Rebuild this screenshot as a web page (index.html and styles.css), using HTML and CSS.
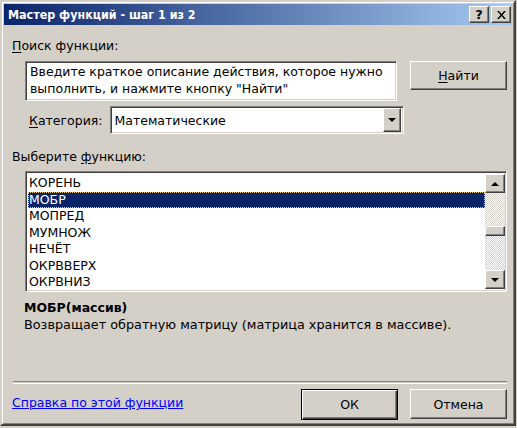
FILE: index.html
```html
<!doctype html>
<html lang="ru">
<head>
    <meta charset="utf-8">
    <link rel="stylesheet" href="styles.css">
    <title>Мастер функций - шаг 1 из 2</title>
</head>
<body>
    <div class="window">
        <div class="titlebar">
            <span class="title">Мастер функций - шаг 1 из 2</span>
            <span class="caption-btns">
                <span class="cbtn">?</span>
                <span class="cbtn cbtn-x">
                    <svg width="9" height="8" viewBox="0 0 9 8"><path d="M0 0h2l2.5 3 2.5-3h2l-3.5 4 3.5 4h-2l-2.5-3-2.5 3h-2l3.5-4z" fill="#000"/></svg>
                </span>
            </span>
        </div>

        <div class="body">
            <div class="label label-search"><u>П</u>оиск функции:</div>

            <div class="row-search">
                <div class="field search-box">Введите краткое описание действия, которое нужно выполнить, и нажмите кнопку "Найти"</div>
                <div class="btn btn-find"><u>Н</u>айти</div>
            </div>

            <div class="row-category">
                <span class="label"><u>К</u>атегория:</span>
                <div class="field combo">
                    <span class="combo-text">Математические</span>
                    <span class="btn combo-arrow"><i class="tri tri-down"></i></span>
                </div>
            </div>

            <div class="label label-select">Выберите <u>ф</u>ункцию:</div>

            <div class="field listbox">
                <ul class="items">
                    <li>КОРЕНЬ</li>
                    <li class="selected">МОБР</li>
                    <li>МОПРЕД</li>
                    <li>МУМНОЖ</li>
                    <li>НЕЧЁТ</li>
                    <li>ОКРВВЕРХ</li>
                    <li>ОКРВНИЗ</li>
                </ul>
                <div class="scrollbar">
                    <span class="btn sb-btn"><i class="tri tri-up"></i></span>
                    <span class="sb-track"></span>
                    <span class="btn sb-thumb"></span>
                    <span class="sb-track sb-track-long"></span>
                    <span class="btn sb-btn"><i class="tri tri-down"></i></span>
                </div>
            </div>

            <div class="fn-name">МОБР(массив)</div>
            <div class="fn-desc">Возвращает обратную матрицу (матрица хранится в массиве).</div>

            <div class="separator"></div>

            <div class="row-bottom">
                <a class="help" href="#">Справка по этой функции</a>
                <div class="btn btn-ok">ОК</div>
                <div class="btn btn-cancel">Отмена</div>
            </div>
        </div>
    </div>
</body>
</html>
```

FILE: styles.css
```css
html, body {
    height: 100%;
}
body {
    margin: 0;
    padding: 0;
    background: #d4d0c8;
    font-family: "DejaVu Sans", "Liberation Sans", sans-serif;
    font-size: 12.5px;
    color: #000;
}
.window {
    width: 516px;
    height: 426px;
    box-sizing: border-box;
    border: 2px solid;
    border-color: #d4d0c8 #404040 #404040 #d4d0c8;
    box-shadow: inset 1px 1px #fff, inset -1px -1px #808080;
    padding: 2px;
    background: #d4d0c8;
}
.titlebar {
    height: 21px;
    display: flex;
    align-items: center;
    justify-content: space-between;
    padding: 0 1px 0 4px;
    background: linear-gradient(to right, #0a246a, #a6caf0);
}
.title {
    color: #fff;
    font-family: "DejaVu Sans Condensed", "DejaVu Sans", sans-serif;
    font-stretch: condensed;
    font-weight: bold;
    font-size: 12.4px;
}
.caption-btns {
    display: flex;
    gap: 2px;
}
.cbtn {
    width: 20px;
    height: 17px;
    box-sizing: border-box;
    display: flex;
    align-items: center;
    justify-content: center;
    background: #d4d0c8;
    border: 1px solid;
    border-color: #fff #404040 #404040 #fff;
    box-shadow: inset -1px -1px #808080;
    font-weight: bold;
    font-size: 13px;
    line-height: 1;
}
.body {
    padding: 0 5px 0 8px;
}
u {
    text-decoration: underline;
    text-underline-offset: 2px;
}
.label {
    line-height: 15px;
    white-space: nowrap;
}
.label-search {
    margin-top: 13px;
}
.field {
    box-sizing: border-box;
    background: #fff;
    border: 1px solid;
    border-color: #808080 #fff #fff #808080;
    box-shadow: inset 1px 1px #404040, inset -1px -1px #d4d0c8;
}
.btn {
    box-sizing: border-box;
    display: flex;
    align-items: center;
    justify-content: center;
    background: #d4d0c8;
    border: 1px solid;
    border-color: #fff #404040 #404040 #fff;
    box-shadow: inset -1px -1px #808080;
}
.row-search {
    display: flex;
    justify-content: space-between;
    align-items: flex-start;
    margin-top: 8px;
    padding-left: 13px;
}
.search-box {
    width: 372px;
    height: 40px;
    padding: 1px 4px;
    line-height: 17px;
}
.btn-find {
    width: 97px;
    height: 29px;
}
.row-category {
    display: flex;
    align-items: center;
    margin-top: 5px;
    padding-left: 17px;
    gap: 7px;
}
.combo {
    width: 294px;
    height: 28px;
    display: flex;
    align-items: center;
    justify-content: space-between;
    padding: 2px;
}
.combo-text {
    padding-left: 2px;
}
.combo-arrow {
    width: 18px;
    height: 24px;
}
.tri {
    width: 0;
    height: 0;
    border-left: 4px solid transparent;
    border-right: 4px solid transparent;
}
.tri-down {
    border-top: 4px solid #000;
}
.tri-up {
    border-bottom: 4px solid #000;
}
.label-select {
    margin-top: 15px;
}
.listbox {
    margin: 7px 0 0 13px;
    width: 482px;
    height: 121px;
    display: flex;
    padding: 2px 1px 2px 2px;
}
.items {
    flex: 1;
    margin: 0;
    padding: 1px 0 0;
    list-style: none;
}
.items li {
    height: 16.5px;
    line-height: 16.5px;
    padding-left: 1px;
    box-sizing: border-box;
}
.items li.selected {
    background: #0a246a;
    color: #fff;
    border: 1px dotted #f0d080;
    padding-left: 0;
    line-height: 14.5px;
}
.scrollbar {
    width: 20px;
    display: flex;
    flex-direction: column;
}
.sb-btn {
    height: 19px;
    flex: none;
}
.sb-thumb {
    height: 10px;
    flex: none;
}
.sb-track {
    height: 33px;
    background: repeating-conic-gradient(#fff 0 25%, #d4d0c8 0 50%) 0 0 / 2px 2px;
}
.sb-track-long {
    height: auto;
    flex: 1;
}
.fn-name {
    margin: 8px 0 0 12px;
    font-weight: bold;
    line-height: 15px;
}
.fn-desc {
    margin: 2px 0 0 12px;
    line-height: 15px;
    font-size: 12.8px;
}
.separator {
    margin: 49px 0 0 1px;
    height: 1px;
    border-top: 1px solid #808080;
    border-bottom: 1px solid #fff;
}
.row-bottom {
    display: flex;
    align-items: flex-start;
    margin-top: 5px;
}
.help {
    color: #0000ff;
    text-decoration: underline;
    margin-top: 6px;
    flex: 1;
}
.btn-ok {
    width: 97px;
    height: 31px;
    border: 1px solid #000;
    box-shadow: inset 1px 1px #fff, inset -1px -1px #404040, inset -2px -2px #808080;
    margin-right: 12px;
}
.btn-cancel {
    width: 97px;
    height: 30px;
}
```
